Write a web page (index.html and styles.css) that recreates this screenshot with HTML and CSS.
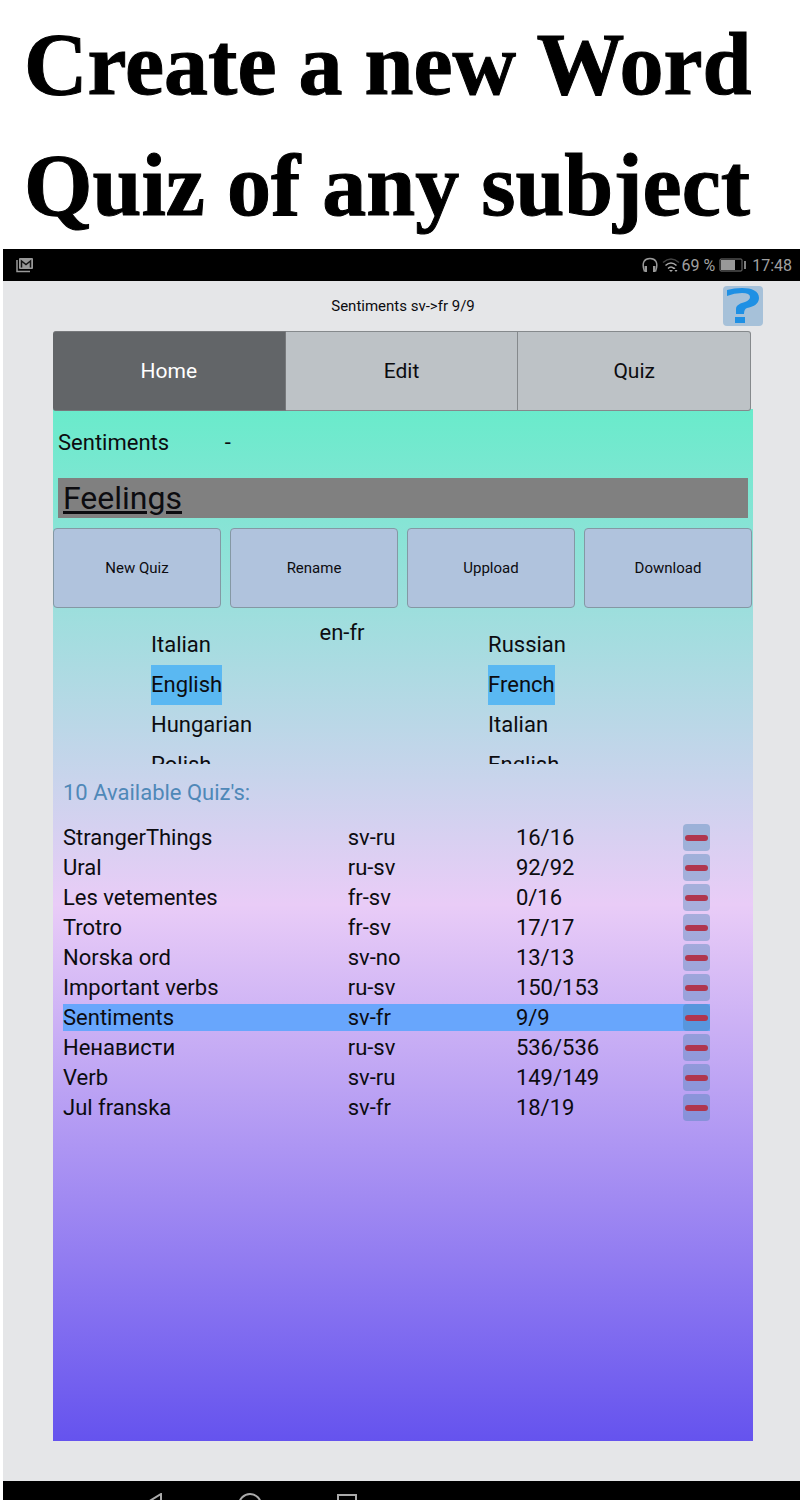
FILE: index.html
```html
<!DOCTYPE html>
<html lang="en">
<head>
<meta charset="utf-8">
<meta name="viewport" content="width=device-width, initial-scale=1">
<title>Word Quiz</title>
<link rel="stylesheet" href="styles.css">
</head>
<body>
<h1 class="headline">Create a new Word<br>Quiz of any subject</h1>
<div class="device">
  <div class="status">
    <svg class="mail" width="18" height="16" viewBox="0 0 18 16" aria-hidden="true"><path d="M1 3v11.500h13" fill="none" stroke="#999" stroke-width="1.500"/><rect x="3" y="1" width="14" height="11" rx="1" fill="#999"/><path d="M5.500 10.500V4L10 7.500 14.500 4v6.500" fill="none" stroke="#111" stroke-width="1.500"/></svg>
    <svg width="16" height="16" viewBox="0 0 16 16" aria-hidden="true"><path d="M2.500 14.500C-1 5 3 1.500 8 1.500s9 3.500 5.500 13" fill="none" stroke="#999" stroke-width="1.500"/><path d="M3.800 9v6M12.200 9v6" stroke="#999" stroke-width="2.400"/></svg>
    <svg class="wifi" width="18" height="16" viewBox="0 0 18 16" aria-hidden="true"><g fill="none"><path d="M1 5.500q8-7 16 0" stroke="#444" stroke-width="1.500"/><path d="M3.500 8.500q5.500-5 11 0M6 11.500q3-3 6 0" stroke="#aaa" stroke-width="1.500"/></g><path d="M9 15l-2-2h4zM12 10l1.500 2h-3zM14 15l-1.500-2h3z" fill="#aaa"/></svg>
    <span class="charge">69 %</span>
    <svg class="battery" width="28" height="14" viewBox="0 0 28 14" aria-hidden="true"><rect x="1" y="1" width="22" height="12" rx="1" fill="none" stroke="#777"/><rect x="2" y="2" width="14" height="10" fill="#999"/><path d="M26 3v8" stroke="#aaa" stroke-width="1.500"/></svg>
    <span>17:48</span>
  </div>
  <main class="screen">
    <header class="top">
      <p class="current">Sentiments sv-&gt;fr 9/9</p>
      <button class="help" type="button" aria-label="Help"><svg width="40" height="40" viewBox="0 0 40 40" aria-hidden="true"><path d="M4 4Q11 2 19 2C29 2 36 5 36 12C36 18 30 21 24 22Q21 23 21 28H13V23C13 19 18 17 22 16Q27 14 27 11Q27 7 19 7Q11 7 4 10ZM12 31H22V37H12Z" fill="#1e90e4"/></svg></button>
    </header>
    <nav class="tabs">
      <button class="tab active" type="button">Home</button>
      <button class="tab" type="button">Edit</button>
      <button class="tab" type="button">Quiz</button>
    </nav>
    <section class="panel">
      <div class="quiz-name"><span>Sentiments</span><span>-</span></div>
      <input class="subject" type="text" value="Feelings" aria-label="Subject">
      <div class="actions">
        <button class="action" type="button">New Quiz</button>
        <button class="action" type="button">Rename</button>
        <button class="action" type="button">Uppload</button>
        <button class="action" type="button">Download</button>
      </div>
      <div class="languages">
        <ul class="list" role="listbox" aria-label="From language">
          <li role="option">Italian</li>
          <li role="option" aria-selected="true">English</li>
          <li role="option">Hungarian</li>
          <li role="option">Polish</li>
        </ul>
        <p class="pair">en-fr</p>
        <ul class="list" role="listbox" aria-label="To language">
          <li role="option">Russian</li>
          <li role="option" aria-selected="true">French</li>
          <li role="option">Italian</li>
          <li role="option">English</li>
        </ul>
      </div>
      <h2 class="count">10 Available Quiz's:</h2>
      <table class="quizzes">
        <tbody>
        <tr><td class="name">StrangerThings</td><td class="langs">sv-ru</td><td class="score">16/16</td><td class="tool"><button class="remove" type="button" aria-label="Remove StrangerThings"></button></td></tr>
        <tr><td>Ural</td><td>ru-sv</td><td>92/92</td><td><button class="remove" type="button" aria-label="Remove Ural"></button></td></tr>
        <tr><td>Les vetementes</td><td>fr-sv</td><td>0/16</td><td><button class="remove" type="button" aria-label="Remove Les vetementes"></button></td></tr>
        <tr><td>Trotro</td><td>fr-sv</td><td>17/17</td><td><button class="remove" type="button" aria-label="Remove Trotro"></button></td></tr>
        <tr><td>Norska ord</td><td>sv-no</td><td>13/13</td><td><button class="remove" type="button" aria-label="Remove Norska ord"></button></td></tr>
        <tr><td>Important verbs</td><td>ru-sv</td><td>150/153</td><td><button class="remove" type="button" aria-label="Remove Important verbs"></button></td></tr>
        <tr class="selected"><td>Sentiments</td><td>sv-fr</td><td>9/9</td><td><button class="remove" type="button" aria-label="Remove Sentiments"></button></td></tr>
        <tr><td>Ненависти</td><td>ru-sv</td><td>536/536</td><td><button class="remove" type="button" aria-label="Remove Ненависти"></button></td></tr>
        <tr><td>Verb</td><td>sv-ru</td><td>149/149</td><td><button class="remove" type="button" aria-label="Remove Verb"></button></td></tr>
        <tr><td>Jul franska</td><td>sv-fr</td><td>18/19</td><td><button class="remove" type="button" aria-label="Remove Jul franska"></button></td></tr>
        </tbody>
      </table>
    </section>
  </main>
  <footer class="navbar">
    <svg width="24" height="24" viewBox="0 0 24 24" aria-hidden="true"><path d="M20 1v22L2 12z"/></svg>
    <svg width="24" height="24" viewBox="0 0 24 24" aria-hidden="true"><circle cx="12" cy="12" r="11"/></svg>
    <svg width="24" height="24" viewBox="0 0 24 24" aria-hidden="true"><rect x="3" y="2" width="18" height="18"/></svg>
  </footer>
</div>
</body>
</html>
```
FILE: styles.css
```css
* { box-sizing: border-box; }
body {
  margin: 0;
  min-height: 100vh;
  display: flex;
  flex-direction: column;
  background: #fff;
  color: #0c0c10;
  font: 22px/27px Roboto, sans-serif;
}
p, h1, h2, ul { margin: 0; padding: 0; font-weight: 400; }
button, input { font: inherit; color: inherit; margin: 0; padding: 0; }
.headline {
  padding: 4px 0 3px 24px;
  color: #000;
  font: 700 88px/121px "Liberation Serif", serif;
  -webkit-text-stroke: 1px #000;
  white-space: nowrap;
}
.device {
  flex: 1;
  display: flex;
  flex-direction: column;
  margin-left: 3px;
  background: #e5e6e8;
}
.status {
  display: flex;
  align-items: center;
  gap: 4px;
  height: 32px;
  padding: 0 8px 0 13px;
  background: #000;
  color: #a0a0a0;
  font-size: 16px;
}
.mail { margin-right: auto; }
.wifi { margin-right: -3px; }
.battery { margin-right: 1px; }
.screen {
  flex: 1;
  display: flex;
  flex-direction: column;
  padding: 5px 47px 40px 50px;
}
.top { position: relative; height: 45px; }
.current { font-size: 15px; line-height: 40px; text-align: center; }
.help {
  position: absolute;
  top: 0;
  right: -10px;
  width: 40px;
  height: 40px;
  border: 0;
  border-radius: 4px;
  background: #a6c1d9;
}
.help svg { display: block; }
.tabs { position: relative; display: flex; margin-right: 2px; }
.tab {
  flex: 1;
  height: 80px;
  border: 1px solid #85898c;
  border-left-width: 0;
  background: #bdc2c6;
  font-size: 21px;
}
.tab:last-child { border-radius: 0 3px 3px 0; }
.tab.active { background: #626568; border-color: #77797c; color: #fff; border-radius: 3px 0 0 3px; }
.panel {
  flex: 1;
  margin-top: -2px;
  padding-top: 20px;
  background: linear-gradient(#69ebcb, #e9ccf7 48%, #6553ee);
}
.quiz-name {
  display: grid;
  grid-template-columns: 24% 1fr;
  padding-left: 5px;
}
.subject {
  display: block;
  width: calc(100% - 10px);
  height: 40px;
  margin: 22px 5px 10px;
  padding: 0 5px;
  border: 0;
  background: #808080;
  font-size: 32px;
  text-decoration: underline;
}
.actions { display: flex; gap: 9px; margin-right: 1px; }
.action {
  flex: 1;
  height: 80px;
  border: 1px solid #8498a4;
  border-radius: 4px;
  background: #b0c3dd;
  font-size: 15px;
}
.languages {
  display: grid;
  grid-template-columns: 28% 28% 1fr;
  height: 156px;
  padding-left: 14%;
  overflow: hidden;
}
.list { padding-top: 17px; list-style: none; }
.list li { width: fit-content; line-height: 40px; }
.list [aria-selected] { background: #5ab8f2; }
.pair { padding-top: 11px; }
.count { padding: 15px 10px; color: #4f88b8; font-size: 22px; }
.quizzes {
  width: calc(100% - 53px);
  margin-left: 10px;
  border-spacing: 0 3px;
  table-layout: fixed;
}
.quizzes td { height: 27px; padding: 0; line-height: 27px; }
.name { width: 44%; }
.langs { width: 26%; }
.tool { width: 27px; }
.selected { background: #68a6fc; }
.remove {
  display: block;
  width: 27px;
  height: 27px;
  border: 0;
  border-radius: 4px;
  background: rgba(70, 130, 180, .4);
}
.remove::before {
  content: "";
  display: block;
  height: 6px;
  margin: 0 2px;
  border-radius: 3px;
  background: #b0364e;
}
.selected .remove { background: #5896dd; }
.navbar {
  display: flex;
  gap: 73px;
  height: 19px;
  padding: 12px 0 0 138px;
  overflow: hidden;
  background: #000;
}
.navbar svg { flex: none; fill: none; stroke: #aaa; stroke-width: 2; }
```
